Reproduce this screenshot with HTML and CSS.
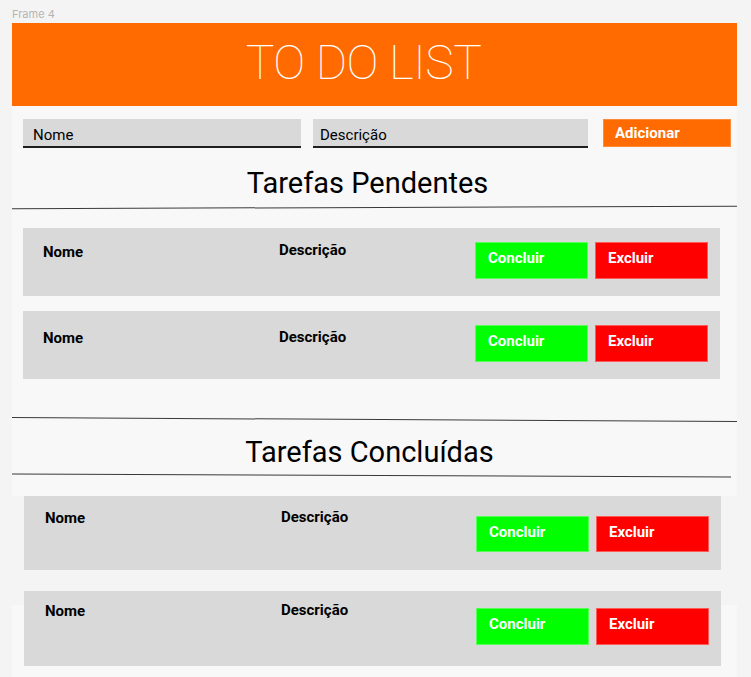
FILE: index.html
```html
<!DOCTYPE html>
<html lang="pt-BR">
<head>
<meta charset="utf-8">
<title>To Do List</title>
<link rel="stylesheet" href="styles.css">
</head>
<body>
<div class="frame-label">Frame 4</div>
<main class="frame">
  <header class="banner"><h1 class="banner-title">TO DO LIST</h1></header>
  <form class="add-row">
    <div class="field field-name">Nome</div>
    <div class="field field-desc">Descrição</div>
    <button type="button" class="btn-add">Adicionar</button>
  </form>
  <h2 class="section-title title-pending">Tarefas Pendentes</h2>
  <hr class="rule rule-a">
  <ul class="task-list pending-list">
    <li class="task-card card-1">
      <span class="task-name">Nome</span>
      <span class="task-desc">Descrição</span>
      <button type="button" class="btn btn-done">Concluir</button>
      <button type="button" class="btn btn-del">Excluir</button>
    </li>
    <li class="task-card card-2">
      <span class="task-name">Nome</span>
      <span class="task-desc">Descrição</span>
      <button type="button" class="btn btn-done">Concluir</button>
      <button type="button" class="btn btn-del">Excluir</button>
    </li>
  </ul>
  <hr class="rule rule-b">
  <h2 class="section-title title-done">Tarefas Concluídas</h2>
  <hr class="rule rule-c">
</main>
<section class="done-area">
  <ul class="task-list done-list">
    <li class="task-card done-card card-3">
      <span class="task-name">Nome</span>
      <span class="task-desc">Descrição</span>
      <button type="button" class="btn btn-done">Concluir</button>
      <button type="button" class="btn btn-del">Excluir</button>
    </li>
    <li class="task-card done-card card-4">
      <span class="task-name">Nome</span>
      <span class="task-desc">Descrição</span>
      <button type="button" class="btn btn-done">Concluir</button>
      <button type="button" class="btn btn-del">Excluir</button>
    </li>
  </ul>
</section>
</body>
</html>
```

FILE: styles.css
```css
* { box-sizing: border-box; }

html, body {
  margin: 0;
  padding: 0;
  background: #f4f4f4;
  font-family: Roboto, "Liberation Sans", sans-serif;
  color: #000;
  overflow: hidden;
}

.frame-label {
  font-family: Inter, Roboto, sans-serif;
  font-size: 11px;
  line-height: 15px;
  color: #b4b4b4;
  padding: 7px 0 0 12px;
  height: 23px;
}

.frame {
  margin-left: 12px;
  width: 725px;
  background: #f8f8f8;
  padding-bottom: 20px;
}

.banner {
  height: 83px;
  background: #ff6b00;
  display: flex;
  align-items: center;
  justify-content: center;
  padding: 0 22px 3px 0;
}

.banner-title {
  margin: 0;
  font-family: Roboto, sans-serif;
  font-weight: 100;
  font-size: 48px;
  line-height: 56px;
  color: #fff;
  letter-spacing: -0.5px;
}

.add-row {
  display: flex;
  align-items: flex-start;
  padding: 13px 0 0 11px;
  margin: 0;
}

.field {
  height: 29px;
  background: #d9d9d9;
  border-bottom: 2px solid #1f1f1f;
  font-size: 15px;
  line-height: 16px;
  padding: 8px 0 0 10px;
}

.field-name { width: 278px; }
.field-desc { width: 275px; margin-left: 12px; padding-left: 7px; }

.btn-add {
  margin-left: 15px;
  width: 128px;
  height: 28px;
  background: #ff6b00;
  border: 1px solid #ff8a3a;
  color: #fff;
  font-family: Roboto, sans-serif;
  font-weight: 700;
  font-size: 15px;
  line-height: 16px;
  text-align: left;
  padding: 0 0 0 11px;
}

.section-title {
  margin: 0;
  font-weight: 400;
  font-size: 29px;
  line-height: 36px;
  text-align: center;
  padding-right: 14px;
}

.title-pending { margin-top: 17px; }
.title-done { margin-top: 14px; padding-right: 10px; }

.rule {
  border: 0;
  height: 1px;
  background: #3a3a3a;
  margin: 0;
}

.rule-a { margin-top: 6px; transform: rotate(-0.18deg); }
.rule-b { margin-top: 40px; transform: rotate(0.3deg); }
.rule-c { margin-top: 5px; width: 719px; transform: rotate(0.22deg); }

.task-list {
  list-style: none;
  margin: 0;
  padding: 0;
  display: flex;
  flex-direction: column;
  gap: 15px;
}

.pending-list { margin: 20px 0 0 11px; }

.task-card {
  width: 697px;
  height: 68px;
  background: #d9d9d9;
  display: grid;
  grid-template-columns: 236px 196px 113px 113px;
  align-items: start;
  padding: 14px 12px 0 20px;
}

.task-card .btn-del { margin-left: 7px; }

.task-name,
.task-desc {
  font-weight: 700;
  font-size: 15px;
  line-height: 16px;
}

.task-name { margin-top: 2px; }

.card-2 .task-name { margin-top: 5px; }
.card-2 .task-desc { margin-top: 4px; }

.btn {
  height: 37px;
  border: 1px solid rgba(255, 255, 255, 0.35);
  color: #fff;
  font-family: Roboto, sans-serif;
  font-weight: 700;
  font-size: 15px;
  line-height: 16px;
  display: flex;
  align-items: flex-start;
  justify-content: flex-start;
  padding: 7px 0 0 12px;
  align-self: start;
}

.btn-done { background: #00ff00; }
.btn-del { background: #ff0000; width: 113px; }

.done-area {
  margin-left: 12px;
  width: 725px;
  height: 200px;
  background: linear-gradient(to bottom, transparent 0, transparent 109px, #f8f8f8 109px);
  padding-left: 12px;
}

.done-list { gap: 21px; }

.done-card {
  padding-left: 21px;
  grid-template-columns: 236px 195px 113px 113px;
}

.card-3 { height: 74px; padding-top: 13px; }
.card-3 .task-name { margin-top: 1px; }
.card-3 .btn { margin-top: 7px; height: 36px; padding-top: 7px; }

.card-4 { height: 75px; padding-top: 11px; }
.card-4 .task-name { margin-top: 1px; }
.card-4 .btn { margin-top: 6px; height: 37px; padding-top: 7px; }
```
